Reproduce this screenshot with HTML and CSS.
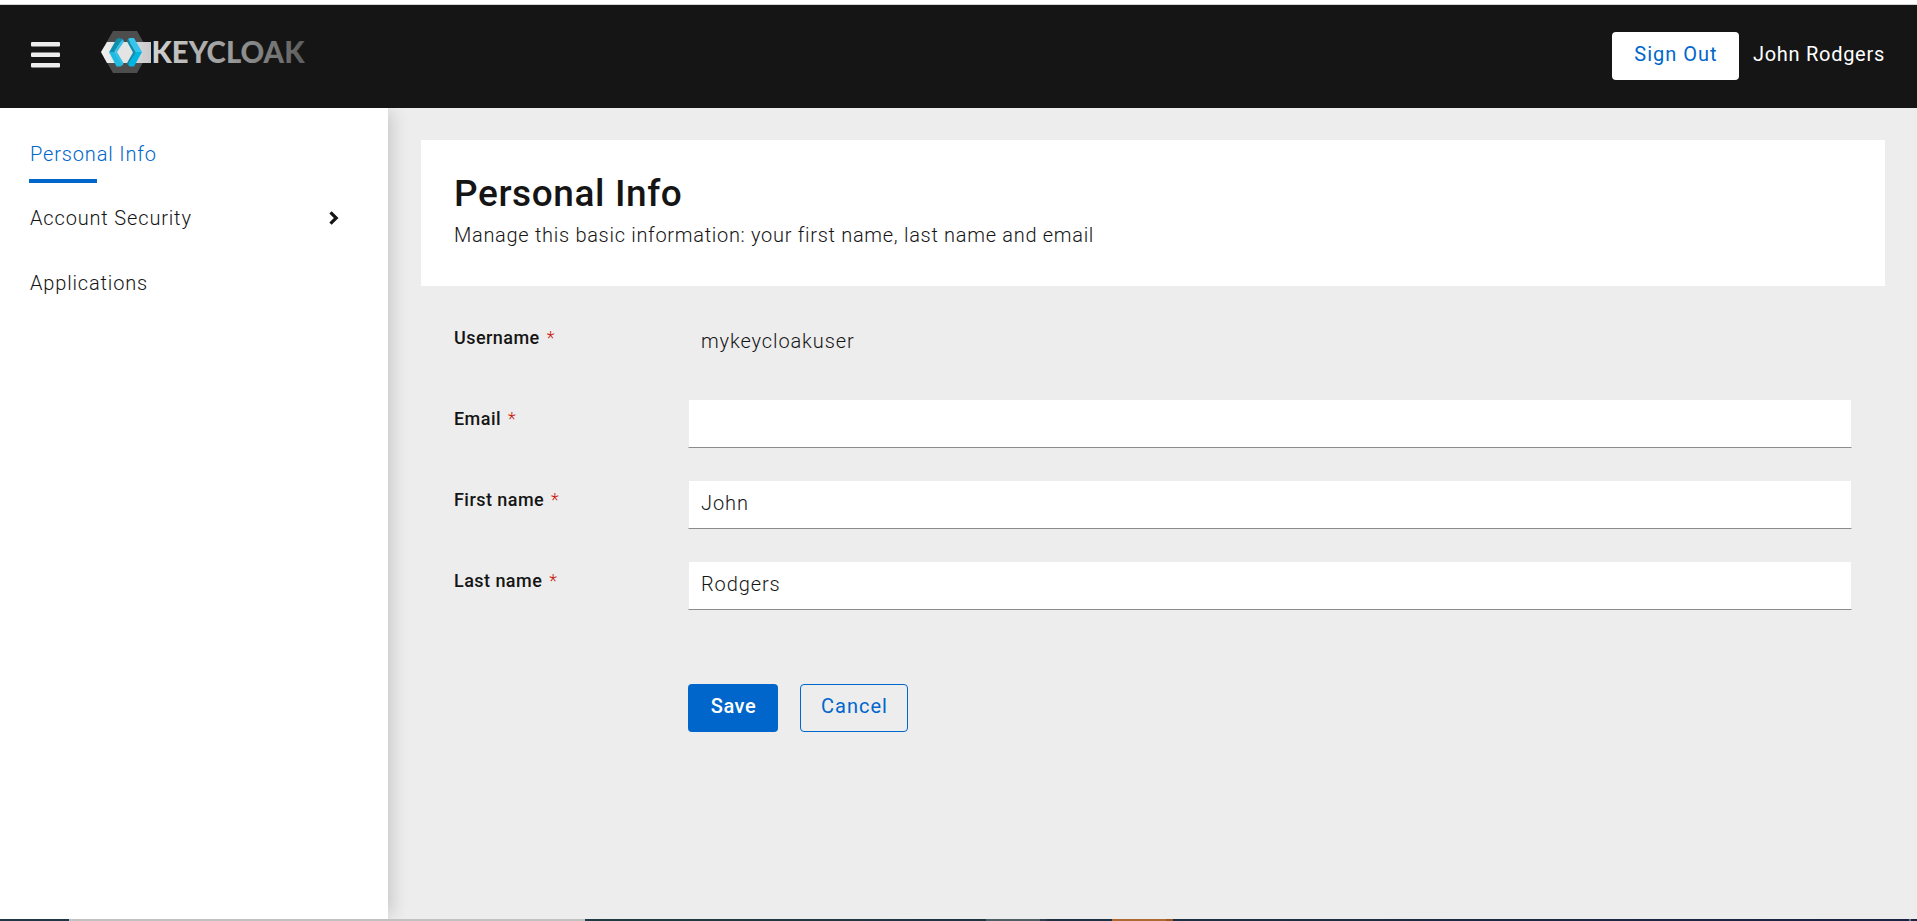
FILE: index.html
```
<!DOCTYPE html>
<html lang="en">
<head>
<meta charset="utf-8">
<title>Keycloak Account Management</title>
<link rel="stylesheet" href="styles.css">
</head>
<body>
<div class="page">
  <header class="header">
    <button class="menu-toggle" type="button">
      <svg width="29" height="26" viewBox="0 0 29 26" fill="#ededed">
        <rect width="29" height="4.600" rx="1"/>
        <rect y="10.500" width="29" height="4.600" rx="1"/>
        <rect y="21" width="29" height="4.600" rx="1"/>
      </svg>
    </button>
    <svg class="logo" width="206" height="44" viewBox="0 0 206 44">
      <defs>
        <linearGradient id="word" gradientUnits="userSpaceOnUse" x1="52" y1="0" x2="205" y2="0">
          <stop offset="0" stop-color="#d2d2d2"/>
          <stop offset="0.5" stop-color="#9a9a9a"/>
          <stop offset="1" stop-color="#5c5c5c"/>
        </linearGradient>
        <linearGradient id="band" x1="0" y1="0" x2="1" y2="0">
          <stop offset="0" stop-color="#f0f0f0"/>
          <stop offset="0.5" stop-color="#dedede"/>
          <stop offset="1" stop-color="#c9c9c9"/>
        </linearGradient>
      </defs>
      <path fill="#4d4d4d" d="M12 0h24l12 21-12 21H12L0 21z"/>
      <path fill="url(#band)" d="M6 11h44v21H6L0 21z"/>
      <path fill="#e4e4e4" d="M20 11h8l6 10-6 11h-8l-6-11z"/>
      <path fill="#0f8fac" d="M15.500 8l3-1 3 1-8 13.500H8z"/>
      <path fill="#1fbbe2" d="M8 21h6l7.500 13-2 1.500h-4z"/>
      <path fill="#35c0e6" d="M21.500 8L23 10.500 16 21l-3-.5zM13 21.500l3-.5 6.500 11-1 2.500z"/>
      <path fill="#35c5ee" d="M27 8l1.500-1H33l8 14-6 .5z"/>
      <path fill="#00b5e4" d="M35 21h6l-8 14.500h-4L27 34z"/>
      <path fill="#0f8fac" d="M27 8l8 13.500L27 34l-1-2 6-10.500-6-11z"/>
      <text class="wordmark" x="50.500" y="32" textLength="153" lengthAdjust="spacingAndGlyphs" fill="url(#word)">KEYCLOAK</text>
    </svg>
    <div class="header-tools">
      <button class="button button-light" type="button">Sign Out</button>
      <span class="user-name">John Rodgers</span>
    </div>
  </header>
  <div class="body">
    <nav class="sidebar">
      <a class="nav-item nav-current">Personal Info</a>
      <a class="nav-item">Account Security
        <svg width="10" height="14" viewBox="0 0 10 14" fill="none" stroke="#151515" stroke-width="3.2"><path d="M1.500 1.300L7.200 7l-5.700 5.700"/></svg>
      </a>
      <a class="nav-item">Applications</a>
    </nav>
    <main class="content">
      <section class="intro">
        <h1>Personal Info</h1>
        <p>Manage this basic information: your first name, last name and email</p>
      </section>
      <form class="form">
        <div class="row"><label>Username <span class="required">*</span></label><div class="value">mykeycloakuser</div></div>
        <div class="row"><label for="email">Email <span class="required">*</span></label><input id="email" type="text"></div>
        <div class="row"><label for="first">First name <span class="required">*</span></label><input id="first" type="text" value="John"></div>
        <div class="row"><label for="last">Last name <span class="required">*</span></label><input id="last" type="text" value="Rodgers"></div>
        <div class="actions">
          <button class="button button-primary" type="button">Save</button>
          <button class="button button-secondary" type="button">Cancel</button>
        </div>
      </form>
    </main>
  </div>
  <footer class="taskbar"></footer>
</div>
</body>
</html>
```
FILE: styles.css
```
* { box-sizing: border-box; }
body {
  margin: 0;
  color: #151515;
  font: 300 20px/30px Roboto, "Liberation Sans", sans-serif;
  letter-spacing: 0.84px;
}
.page { display: flex; flex-direction: column; height: 921px; overflow: hidden; }
.header {
  display: flex;
  flex: none;
  align-items: flex-start;
  height: 108px;
  padding-left: 31px;
  padding-right: 32px;
  border-top: 4px solid #fff;
  background: #151515;
  box-shadow: inset 0 1px #d5d5d8;
}
.menu-toggle { height: 26px; margin: 38px 41px 0 0; padding: 0; border: 0; background: none; }
.menu-toggle svg { display: block; }
.logo { flex: none; margin-top: 27px; }
.wordmark { font: 900 29.500px Lato, sans-serif; letter-spacing: 0; }
.header-tools { display: flex; gap: 14px; margin: 28px 0 0 auto; }
.user-name { color: #fff; font-weight: 400; line-height: 44px; letter-spacing: 0.72px; }
.button {
  height: 48px;
  padding: 0 0 4px 1px;
  border: 1px solid transparent;
  border-radius: 4px;
  color: #06c;
  background: none;
  font: 400 20px/30px Roboto, "Liberation Sans", sans-serif;
  letter-spacing: 1px;
}
.button-light { width: 127px; background: #fff; }
.button-primary { width: 90px; color: #fff; background: #06c; font-weight: 500; letter-spacing: 0.5px; }
.button-secondary { width: 108px; border-color: #06c; }
.body { display: flex; flex: 1; min-height: 0; }
.sidebar {
  z-index: 1;
  flex: none;
  width: 388px;
  padding-top: 14px;
  background: #fff;
  box-shadow: 8px 0 16px -4px rgba(3, 3, 3, 0.16);
  clip-path: inset(0 -30px 0 0);
}
.nav-item {
  display: flex;
  align-items: center;
  justify-content: space-between;
  height: 65px;
  padding: 0 49px 4px 30px;
}
.nav-current { position: relative; padding-bottom: 2px; color: #06c; }
.nav-current::after {
  content: "";
  position: absolute;
  left: 29px;
  bottom: 4px;
  width: 68px;
  height: 4px;
  background: #06c;
}
.content { flex: 1; padding: 32px 32px 0 33px; background: #ededed; }
.intro { height: 146px; padding: 32px 33px 0; background: #fff; }
h1 { margin: 0; font-size: 37px; font-weight: 500; line-height: 44px; letter-spacing: 0.6px; }
p { margin: 4px 0 0; line-height: 30px; letter-spacing: 0.7px; }
.form { display: grid; gap: 33px; padding: 33px 33px 0; }
.row { display: grid; grid-template-columns: 234px 1fr; height: 48px; }
label { padding-top: 4px; font-size: 18px; font-weight: 500; line-height: 30px; letter-spacing: 0.45px; }
.required { margin-left: 2px; color: #c9190b; font-weight: 300; }
.value { padding: 7px 13px; line-height: 30px; letter-spacing: 0.88px; }
input {
  width: 100%;
  height: 49px;
  margin-top: -1px;
  padding: 0 12px 3px;
  border: 1px solid #ededed;
  border-bottom-color: #8a8d90;
  border-radius: 0;
  color: #151515;
  background: #fff;
  font: inherit;
  letter-spacing: 0.9px;
}
.actions { display: flex; gap: 22px; padding: 41px 0 0 234px; }
.taskbar {
  flex: none;
  height: 2px;
  background: linear-gradient(90deg, #1e3846 69px, #c1c1c1 69px 585px, #1f3c42 585px, #1e3544 986px, #4f5f66 986px 1040px, #303c48 1040px 1047px, #1d3044 1047px 1112px, #b06a30 1112px 1166px, #9e5524 1166px 1173px, #1c3044 1173px, #1b2443 1909px, #6d7486 1909px 1911px, #1b2443 1911px);
}
```
